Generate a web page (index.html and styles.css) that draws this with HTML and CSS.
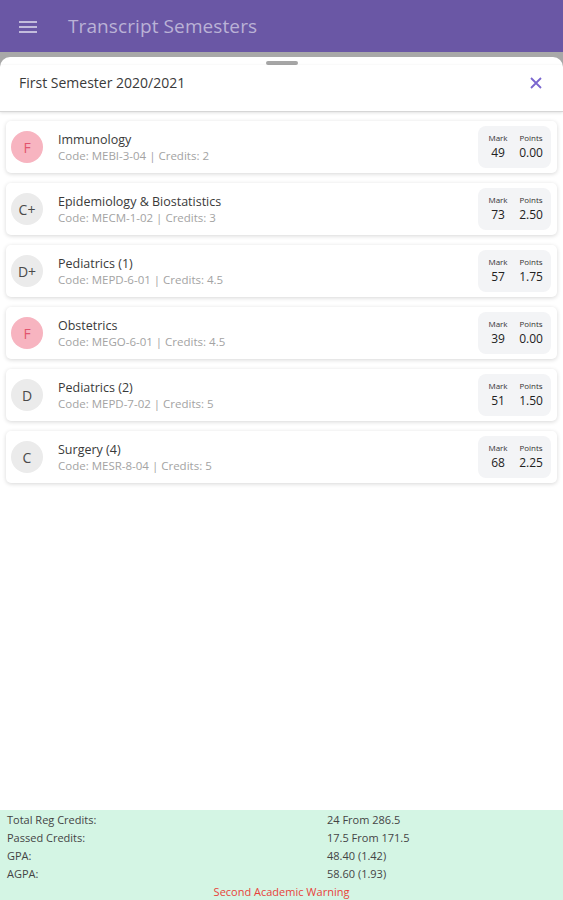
FILE: index.html
```html
<!DOCTYPE html>
<html lang="en">
<head>
    <meta charset="UTF-8">
    <meta name="viewport" content="width=device-width, initial-scale=1.0">
    <title>Transcript Semesters</title>
    <link rel="stylesheet" href="styles.css">
</head>
<body>
    <header class="appbar">
        <svg class="menu-icon" width="18" height="14" viewBox="0 0 18 14">
            <rect x="0" y="1" width="18" height="2" fill="#c3bcdc"/>
            <rect x="0" y="6" width="18" height="2" fill="#c3bcdc"/>
            <rect x="0" y="11" width="18" height="2" fill="#c3bcdc"/>
        </svg>
        <span class="appbar-title">Transcript Semesters</span>
    </header>

    <div class="backdrop">
        <div class="sheet">
            <div class="handle"></div>
            <div class="sheet-header">
                <span>First Semester 2020/2021</span>
                <svg class="close-icon" width="14" height="14" viewBox="0 0 14 14">
                    <path d="M2 2 L12 12 M12 2 L2 12" stroke="#7a66cf" stroke-width="1.8" fill="none"/>
                </svg>
            </div>

            <div class="course-list">
                <div class="course">
                    <div class="grade fail">F</div>
                    <div class="info">
                        <div class="name">Immunology</div>
                        <div class="meta">Code: MEBI-3-04 | Credits: 2</div>
                    </div>
                    <div class="scores">
                        <span class="lbl">Mark</span><span class="lbl">Points</span>
                        <span class="val">49</span><span class="val">0.00</span>
                    </div>
                </div>
                <div class="course">
                    <div class="grade">C+</div>
                    <div class="info">
                        <div class="name">Epidemiology &amp; Biostatistics</div>
                        <div class="meta">Code: MECM-1-02 | Credits: 3</div>
                    </div>
                    <div class="scores">
                        <span class="lbl">Mark</span><span class="lbl">Points</span>
                        <span class="val">73</span><span class="val">2.50</span>
                    </div>
                </div>
                <div class="course">
                    <div class="grade">D+</div>
                    <div class="info">
                        <div class="name">Pediatrics (1)</div>
                        <div class="meta">Code: MEPD-6-01 | Credits: 4.5</div>
                    </div>
                    <div class="scores">
                        <span class="lbl">Mark</span><span class="lbl">Points</span>
                        <span class="val">57</span><span class="val">1.75</span>
                    </div>
                </div>
                <div class="course">
                    <div class="grade fail">F</div>
                    <div class="info">
                        <div class="name">Obstetrics</div>
                        <div class="meta">Code: MEGO-6-01 | Credits: 4.5</div>
                    </div>
                    <div class="scores">
                        <span class="lbl">Mark</span><span class="lbl">Points</span>
                        <span class="val">39</span><span class="val">0.00</span>
                    </div>
                </div>
                <div class="course">
                    <div class="grade">D</div>
                    <div class="info">
                        <div class="name">Pediatrics (2)</div>
                        <div class="meta">Code: MEPD-7-02 | Credits: 5</div>
                    </div>
                    <div class="scores">
                        <span class="lbl">Mark</span><span class="lbl">Points</span>
                        <span class="val">51</span><span class="val">1.50</span>
                    </div>
                </div>
                <div class="course">
                    <div class="grade">C</div>
                    <div class="info">
                        <div class="name">Surgery (4)</div>
                        <div class="meta">Code: MESR-8-04 | Credits: 5</div>
                    </div>
                    <div class="scores">
                        <span class="lbl">Mark</span><span class="lbl">Points</span>
                        <span class="val">68</span><span class="val">2.25</span>
                    </div>
                </div>
            </div>

            <div class="summary">
                <div class="row"><span>Total Reg Credits:</span><span>24 From 286.5</span></div>
                <div class="row"><span>Passed Credits:</span><span>17.5 From 171.5</span></div>
                <div class="row"><span>GPA:</span><span>48.40 (1.42)</span></div>
                <div class="row"><span>AGPA:</span><span>58.60 (1.93)</span></div>
                <div class="warning">Second Academic Warning</div>
            </div>
        </div>
    </div>
</body>
</html>
```

FILE: styles.css
```css
/* Page */
body {
    margin: 0;
    font-family: 'Open Sans', 'Noto Sans', sans-serif;
    background: #fff;
    height: 900px;
    display: flex;
    flex-direction: column;
    overflow: hidden;
}

/* Top app bar */
.appbar {
    height: 52px;
    background: #6a57a5;
    display: flex;
    align-items: center;
    padding-left: 19px;
    flex-shrink: 0;
}

.menu-icon {
    margin-right: 31px;
    margin-top: 1px;
}

.appbar-title {
    color: #bab2d6;
    font-size: 19px;
    letter-spacing: 0.1px;
}

/* Dimmed area behind the sheet */
.backdrop {
    flex: 1;
    background: #a8a8a8;
    padding-top: 5px;
    display: flex;
    flex-direction: column;
}

.sheet {
    flex: 1;
    background: #fff;
    border-radius: 10px 10px 0 0;
    display: flex;
    flex-direction: column;
}

.handle {
    width: 32px;
    height: 4px;
    border-radius: 2px;
    background: #a6a6a6;
    margin: 4px auto 0;
}

.sheet-header {
    height: 35px;
    padding: 0 20px 11px 19px;
    display: flex;
    align-items: center;
    justify-content: space-between;
    font-size: 14px;
    color: #3a3a3a;
    border-bottom: 1px solid #d6d6d6;
    box-shadow: 0 1px 3px rgba(0, 0, 0, 0.12);
}

/* Course cards */
.course-list {
    flex: 1;
    padding: 9px 6px 0;
    display: flex;
    flex-direction: column;
    gap: 10px;
}

.course {
    height: 52px;
    background: #fff;
    border-radius: 5px;
    box-shadow: 0 1px 4px rgba(0, 0, 0, 0.16);
    display: flex;
    align-items: center;
    padding: 0 6px 0 5px;
}

.grade {
    width: 32px;
    height: 32px;
    border-radius: 50%;
    background: #ebebeb;
    color: #4a4a4a;
    font-size: 14px;
    display: flex;
    align-items: center;
    justify-content: center;
    flex-shrink: 0;
}

.grade.fail {
    background: #f7b4c0;
    color: #e2546f;
}

.info {
    flex: 1;
    margin-left: 15px;
}

.name {
    font-size: 12.5px;
    color: #3a3a3a;
    line-height: 17px;
}

.meta {
    font-size: 11.5px;
    color: #a3a3a3;
    line-height: 16px;
}

.scores {
    width: 73px;
    height: 42px;
    box-sizing: border-box;
    padding-left: 8px;
    background: #f3f4f6;
    border-radius: 8px;
    display: grid;
    grid-template-columns: 24px 30px;
    column-gap: 6px;
    align-content: center;
}

.scores .lbl {
    font-size: 8px;
    color: #333;
    text-align: center;
    line-height: 12px;
}

.scores .val {
    font-size: 12px;
    color: #222;
    text-align: center;
    line-height: 18px;
}

/* Bottom summary */
.summary {
    background: #d4f5e4;
    height: 90px;
    padding: 1px 7px 0;
    font-size: 11px;
    color: #444;
    box-sizing: border-box;
}

.row {
    display: grid;
    grid-template-columns: 320px 1fr;
    line-height: 18px;
}

.warning {
    text-align: center;
    color: #e8423a;
    line-height: 17px;
}
```
